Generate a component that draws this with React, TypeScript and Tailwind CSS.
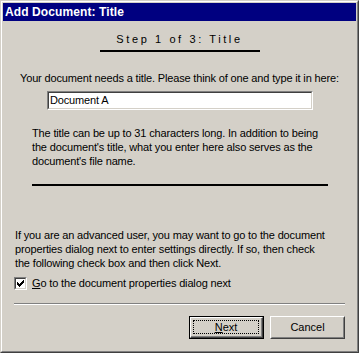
import React from 'react'

const font = { fontFamily: '"Liberation Sans", Arial, sans-serif' }

const Raised = ({ children, isDefault }: { children: React.ReactNode; isDefault?: boolean }) => {
    if (isDefault) {
        return (
            <div className="w-[75px] h-[23px] border border-black">
                <div className="w-full h-full border-t border-l border-white border-b border-r border-b-[#404040] border-r-[#404040]">
                    <div className="w-full h-full border-b border-r border-[#808080] p-[2px]">
                        <div className="w-full h-full border border-dotted border-black flex items-center justify-center text-[11px] text-black">
                            {children}
                        </div>
                    </div>
                </div>
            </div>
        )
    }
    return (
        <div className="w-[75px] h-[23px] border-t border-l border-white border-b border-r border-b-[#404040] border-r-[#404040]">
            <div className="w-full h-full border-t border-l border-[#d4d0c8] border-b border-r border-b-[#808080] border-r-[#808080] flex items-center justify-center text-[11px] text-black">
                {children}
            </div>
        </div>
    )
}

export default function App() {
    return (
        <div className="w-[359px] h-[353px] bg-[#d4d0c8] select-none" style={font}>
            <div className="w-full h-full border-t border-l border-[#d4d0c8] border-b border-r border-b-[#404040] border-r-[#404040]">
                <div className="w-full h-full border-t border-l border-white border-b border-r border-b-[#808080] border-r-[#808080] p-px flex flex-col">
                    {/* title bar */}
                    <div className="h-[18px] bg-[#000080] flex items-center pl-[2px]">
                        <span className="text-white font-bold text-[12px] leading-none tracking-[0.1px]">Add Document: Title</span>
                    </div>

                    {/* step header */}
                    <div className="flex justify-center mt-[12px]">
                        <div className="w-[160px] border-b-2 border-black pb-[4px] text-center text-[11px] leading-[13px] tracking-[2.6px] text-black">
                            Step 1 of 3: Title
                        </div>
                    </div>

                    <p className="mt-[20px] pl-[17px] text-[11px] leading-[13px] tracking-[-0.15px] text-black whitespace-nowrap">
                        Your document needs a title. Please think of one and type it in here:
                    </p>

                    <div className="mt-[6px] ml-[44px] w-[266px] h-[19px] border-t border-l border-[#808080] border-b border-r border-b-white border-r-white">
                        <div className="w-full h-full border-t border-l border-[#404040] border-b border-r border-b-[#d4d0c8] border-r-[#d4d0c8] bg-white flex items-center pl-[1px] text-[11px] tracking-[-0.15px] text-black">
                            Document A
                        </div>
                    </div>

                    <div className="ml-[29px] w-[296px] mt-[16px]">
                        <p className="text-[11px] leading-[14px] tracking-[-0.15px] text-black whitespace-nowrap">
                            The title can be up to 31 characters long. In addition to being<br />
                            the document's title, what you enter here also serves as the<br />
                            document's file name.
                        </p>
                        <div className="mt-[16px] h-[2px] bg-black" />
                    </div>

                    <p className="mt-[42px] pl-[12px] text-[11px] leading-[14px] tracking-[-0.15px] text-black whitespace-nowrap">
                        If you are an advanced user, you may want to go to the document<br />
                        properties dialog next to enter settings directly. If so, then check<br />
                        the following check box and then click Next.
                    </p>

                    <div className="mt-[7px] ml-[11px] flex items-center gap-[5px]">
                        <div className="w-[13px] h-[13px] border-t border-l border-[#808080] border-b border-r border-b-white border-r-white">
                            <div className="w-full h-full border-t border-l border-[#404040] border-b border-r border-b-[#d4d0c8] border-r-[#d4d0c8] bg-white flex items-center justify-center">
                                <svg width="7" height="7" viewBox="0 0 7 7" shapeRendering="crispEdges">
                                    <path d="M0 2h1v3h-1zM1 3h1v3h-1zM2 4h1v3h-1zM3 3h1v3h-1zM4 2h1v3h-1zM5 1h1v3h-1zM6 0h1v3h-1z" fill="#000" />
                                </svg>
                            </div>
                        </div>
                        <span className="text-[11px] leading-[13px] tracking-[-0.15px] text-black">
                            <span className="underline">G</span>o to the document properties dialog next
                        </span>
                    </div>

                    <div className="mt-[13px] mx-[11px] border-t border-[#808080] border-b border-b-white" />

                    <div className="mt-[11px] flex justify-end gap-[6px] pr-[11px]">
                        <Raised isDefault><span><span className="underline">N</span>ext</span></Raised>
                        <Raised>Cancel</Raised>
                    </div>
                </div>
            </div>
        </div>
    )
}
